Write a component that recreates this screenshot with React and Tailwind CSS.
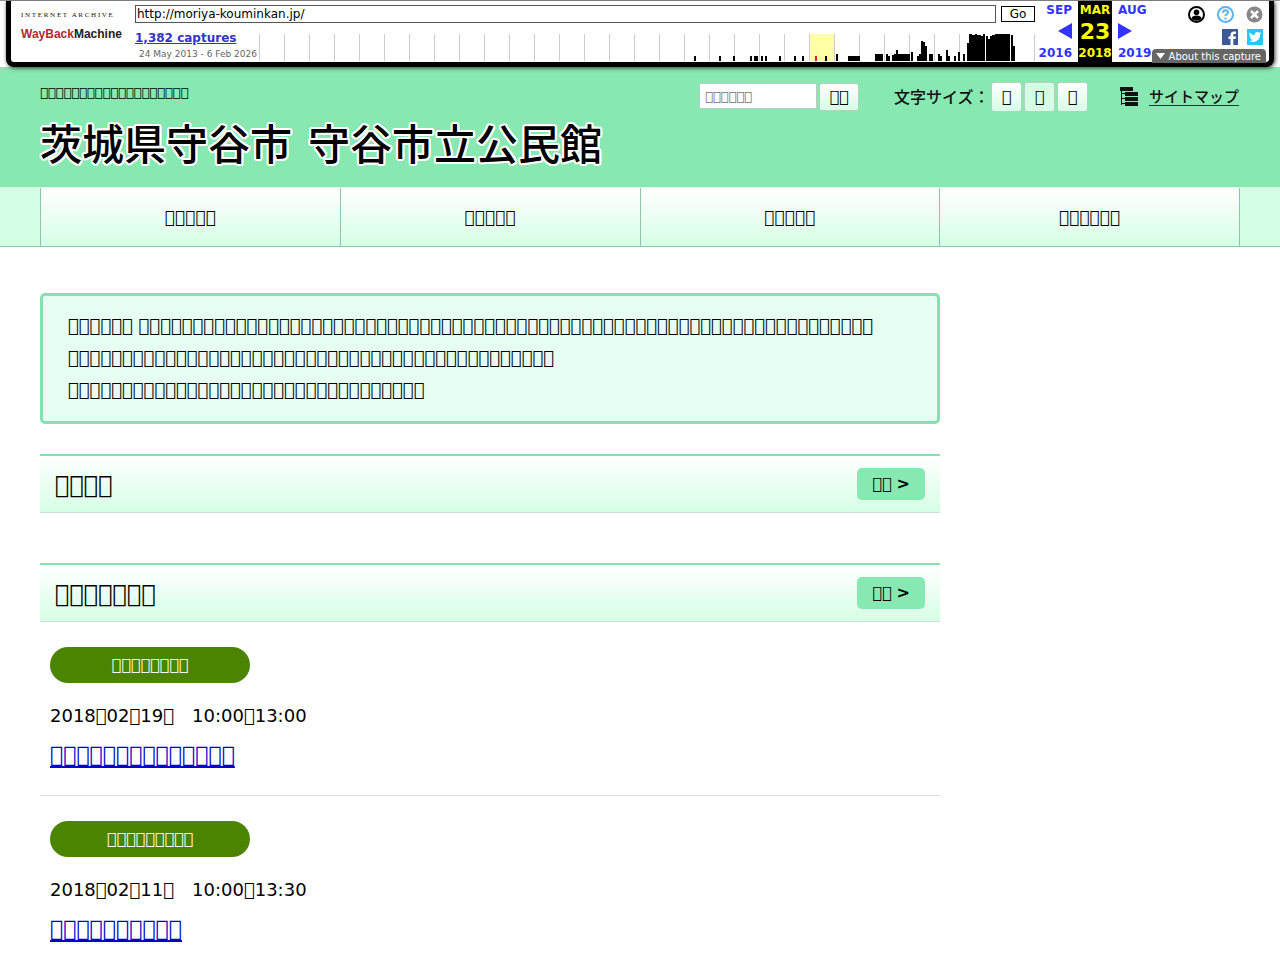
// private use character, drawn as the empty box of the current font
const box = (n) => '\uE9A5'.repeat(n);

const bars = [
  [695, 5], [720, 5], [734, 5], [751, 5], [755, 5], [757, 5], [762, 5], [766, 5],
  [780, 5], [795, 5], [803, 5], [826, 5], [837, 7],
];

const blocks = [
  [848, 12, 5], [875, 8, 7], [886, 2, 7], [888, 2, 5], [892, 3, 6],
  [894, 2, 7], [896, 2, 11], [898, 12, 7], [911, 2, 9], [917, 2, 5], [919, 2, 7],
  [921, 2, 20], [923, 2, 19], [925, 2, 15], [929, 4, 7], [938, 2, 7], [940, 2, 5],
  [946, 2, 11], [948, 2, 5], [954, 2, 5], [958, 2, 9], [963, 2, 7],
  [967, 2, 18], [969, 3, 27], [972, 3, 26], [975, 2, 27], [977, 4, 26], [981, 2, 25],
  [983, 2, 27], [986, 2, 25], [988, 2, 22], [990, 2, 25], [992, 3, 26], [995, 15, 27],
  [1011, 2, 26], [1013, 2, 15],
];

const navItems = [5, 5, 5, 6];

const events = [
  { tag: 8, date: `2018${box(1)}02${box(1)}19${box(1)}`, time: `10:00${box(1)}13:00`, title: 14 },
  { tag: 9, date: `2018${box(1)}02${box(1)}11${box(1)}`, time: `10:00${box(1)}13:30`, title: 10 },
];

function Sparkline() {
  return (
    <svg width="776" height="27" viewBox="259 0 776 27" shapeRendering="crispEdges">
      <rect x="809" y="0" width="25" height="27" fill="#ffffa5" />
      {Array.from({ length: 32 }, (_, i) => (
        <rect key={i} x={259 + i * 25} y="0" width="1" height="27" fill="#ccc" />
      ))}
      {bars.map(([x, h]) => (
        <rect key={x} x={x - 1} y={27 - h} width="2" height={h} />
      ))}
      {blocks.map(([x, w, h]) => (
        <rect key={x} x={x} y={27 - h} width={w} height={h} />
      ))}
      <rect x="815" y="22" width="2" height="5" fill="#d0203a" />
    </svg>
  );
}

function WaybackToolbar() {
  return (
    <div className="border-t border-[#979797]">
      <div className="mx-[6px] flex h-[66px] rounded-b-lg border-x-[5px] border-b-[5px] border-black bg-white shadow-[1px_1px_4px_#333]">
        <a href="#" className="w-[124px] shrink-0 pt-[10px] pl-[10px] font-['Liberation_Serif',serif]">
          <span className="block whitespace-pre text-[7px] leading-[8px] text-[#111]">I N T E R N E T   A R C H I V E</span>
          <span className="block font-['Liberation_Sans',sans-serif] text-[12px] leading-[30px] font-bold text-[#222]">
            <span className="text-[#b02a30]">WayBack</span>Machine
          </span>
        </a>
        <div className="min-w-0 flex-1">
          <form className="flex items-center gap-[5px] pt-1">
            <input
              aria-label="URL"
              defaultValue="http://moriya-kouminkan.jp/"
              className="h-[18px] min-w-0 flex-1 border border-[#555] px-px text-[12px]"
            />
            <button type="button" className="h-4 w-[34px] border border-black text-[12px] leading-[14px]">Go</button>
          </form>
          <div className="flex pt-[7px]">
            <div className="w-[124px] shrink-0 overflow-hidden whitespace-nowrap">
              <a href="#" className="block text-[12px] leading-4 font-bold text-[#33c] underline">1,382 captures</a>
              <div className="pl-1 text-[9px] leading-4 text-[#666]">24 May 2013 - 6 Feb 2026</div>
            </div>
            <div className="pt-1"><Sparkline /></div>
          </div>
        </div>
        <div className="flex shrink-0 text-[12px] leading-[18px] font-bold text-[#33f]">
          <div className="flex w-[43px] flex-col items-end pr-[6px]">
            <a href="#">SEP</a>
            <svg className="my-1" width="14" height="18"><path d="M14 0v16L0 8z" fill="#33f" /></svg>
            <a href="#">2016</a>
          </div>
          <div className="flex w-[34px] flex-col items-center bg-black text-[#ff0]">
            <span>MAR</span>
            <span className="text-[22px] leading-[25px]">23</span>
            <span>2018</span>
          </div>
          <div className="flex w-[41px] flex-col pl-[6px]">
            <a href="#">AUG</a>
            <svg className="my-1" width="14" height="18"><path d="M0 0v16l14-8z" fill="#33f" /></svg>
            <a href="#">2019</a>
          </div>
        </div>
        <div className="flex w-[116px] shrink-0 flex-col items-end">
          <div className="flex items-center gap-3 pt-[5px] pr-[6px]">
            <button type="button" aria-label="Sign in">
              <svg width="17" height="17" viewBox="0 0 17 17">
                <circle cx="8.500" cy="8.500" r="7.500" fill="none" stroke="#000" strokeWidth="2" />
                <circle cx="8.500" cy="6.300" r="2.800" />
                <path d="M3.500 12.500c0-4 10-4 10 0-2.500 3-7.500 3-10 0z" />
              </svg>
            </button>
            <button type="button" aria-label="Help">
              <svg width="17" height="17" viewBox="0 0 17 17" fill="none" stroke="#5ab4ea" strokeWidth="2">
                <circle cx="8.500" cy="8.500" r="7.500" />
                <path d="M6 6.800c0-3.200 5-3.200 5-.3 0 1.800-2.500 1.800-2.500 3.600M8.500 11.500v2" />
              </svg>
            </button>
            <button type="button" aria-label="Close">
              <svg width="17" height="17" viewBox="0 0 17 17">
                <circle cx="8.500" cy="8.500" r="8" fill="#888" />
                <path d="M5 5l7 7m0-7l-7 7" stroke="#fff" strokeWidth="2.500" />
              </svg>
            </button>
          </div>
          <div className="flex gap-[9px] pt-[6px] pr-[6px]">
            <a href="#" aria-label="Facebook">
              <svg width="16" height="16" viewBox="0 0 16 16">
                <path d="M0 0h16v16H0z" fill="#3b5998" />
                <path d="M8.500 16V10H6.500V7.500h2V6c0-2.300 1.200-3.500 3.300-3.500H14v2.400h-1.500c-.8 0-1.200.4-1.200 1.100v1.500H14l-.4 2.500h-2.300v6z" fill="#fff" />
              </svg>
            </a>
            <a href="#" aria-label="Twitter">
              <svg width="16" height="16" viewBox="0 0 16 16">
                <path d="M0 0h16v16H0z" fill="#1dcaff" />
                <path d="M2.500 3.500c1.400 1.600 3 2.500 5.200 2.600C7.300 3 10.800 2 12.300 3.700l1.700-.6-1 1.500 1.300-.3-1.300 1.400c.1 5.500-5.500 9-11 6.300 1.500 0 2.700-.3 3.600-1.100-1.200-.1-2-.8-2.300-1.800h1.100C3.100 8.700 2.400 7.700 2.400 6.500l1.100.3C2.400 6 2 4.800 2.500 3.500z" fill="#fff" />
              </svg>
            </a>
          </div>
          <button type="button" className="mt-1 mr-[3px] flex h-[14px] shrink-0 items-center gap-1 rounded-t-sm bg-[#666] pr-[5px] pl-1 text-[10px] whitespace-nowrap text-white">
            <svg width="9" height="6"><path d="M0 0h9L4.500 6z" fill="#fff" /></svg>
            About this capture
          </button>
        </div>
      </div>
    </div>
  );
}

const sizeButton = 'h-[30px] w-[31px] rounded-[3px] border border-[#b5cfc0] bg-linear-to-b text-[16px]';

function Header() {
  return (
    <header className="bg-[#87e8b1] px-10">
      <div className="flex h-[120px] justify-between">
        <div>
          <p className="pt-[17px] text-[13px] leading-[18px]">{box(19)}</p>
          <h1 className="flex gap-4 pt-[14px] font-['Noto_Sans_CJK_JP',sans-serif] text-[42px] leading-[52px] font-medium [text-shadow:-2px_-1px_#fff,2px_-1px_#fff,-2px_1px_#fff,2px_1px_#fff,-1px_-2px_#fff,1px_-2px_#fff,-1px_2px_#fff,1px_2px_#fff]">
            <span>茨城県守谷市</span>
            <span>守谷市立公民館</span>
          </h1>
        </div>
        <div className="flex items-start pt-[15px] pr-px">
          <div className="flex gap-[2px] pt-px">
            <input
              aria-label="search"
              placeholder={box(6)}
              className="h-[26px] w-[118px] border border-[#b5cfc0] bg-white px-[5px] text-[13px] placeholder:text-[#757575]"
            />
            <button type="button" className="h-[28px] w-10 rounded-[3px] border border-[#b5cfc0] bg-linear-to-b from-white to-[#d5ffe5] text-[16px]">{box(2)}</button>
          </div>
          <span className="ml-[35px] w-[97px] font-['Noto_Sans_CJK_JP',sans-serif] text-[16px] leading-7 font-medium whitespace-nowrap text-[#111]">文字サイズ：</span>
          <div className="flex gap-[2px]">
            <button type="button" className={`${sizeButton} from-white to-[#d5ffe5]`}>{box(1)}</button>
            <button type="button" className={`${sizeButton} from-[#d5ffe5] to-[#d5ffe5]`}>{box(1)}</button>
            <button type="button" className={`${sizeButton} from-white to-[#d5ffe5]`}>{box(1)}</button>
          </div>
          <a href="#" className="ml-8 flex items-start gap-[11px] pt-[5px]">
            <svg width="18" height="19" viewBox="0 0 18 19" fill="#111">
              <path d="M0 0h13v4H0zM5 5h13v4H5zM5 10h13v4H5zM5 15h13v4H5zM1 4h1v14H1zM1 6h4v1H1zM1 11h4v1H1zM1 16h4v1H1z" />
            </svg>
            <span className="border-b border-[#333] font-['Noto_Sans_CJK_JP',sans-serif] text-[15px] leading-[18px] font-medium text-[#111]">サイトマップ</span>
          </a>
        </div>
      </div>
    </header>
  );
}

function SectionTitle({ count }) {
  return (
    <div className="flex h-[59px] items-start justify-between border-t-2 border-b border-t-[#87e0b1] border-b-[#ccdfd4] bg-linear-to-b from-white to-[#d5ffe5] px-[15px]">
      <h2 className="pt-[11px] text-[24px] leading-9">{box(count)}</h2>
      <a href="#" className="mt-3 h-8 rounded-[5px] bg-[#87e8b1] px-[15px] text-[16px] leading-8">{box(2)} <span className="font-bold">&gt;</span></a>
    </div>
  );
}

export default function App() {
  return (
    <div className="bg-white font-['DejaVu_Sans',sans-serif] text-black">
      <div className="relative z-10"><WaybackToolbar /></div>
      <Header />
      <nav className="flex border-b border-[#8fc5a8] bg-[#d5ffe5] px-10 pt-px">
        <ul className="flex flex-1 border-l border-[#8fc5a8]">
          {navItems.map((n, i) => (
            <li key={i} className="flex-1 border-r border-[#8fc5a8] bg-linear-to-b from-white to-[#d5ffe5]">
              <a href="#" className="block text-center text-[17px] leading-[58px]">{box(n)}</a>
            </li>
          ))}
        </ul>
      </nav>
      <main className="mx-10 mt-[46px] max-w-[900px]">
        <div className="rounded-[5px] border-3 border-[#87e0b1] bg-[#e7fff2] px-[25px] pt-[14px] pb-[15px] text-[18px] leading-8">
          <p>{box(6)} {box(68)}</p>
          <p>{box(45)}</p>
          <p>{box(33)}</p>
        </div>
        <section className="mt-[30px]">
          <SectionTitle count={4} />
        </section>
        <section className="mt-[50px]">
          <SectionTitle count={7} />
          {events.map((e) => (
            <article key={e.date} className="border-b border-[#ddd] px-[10px] pt-[25px] pb-[22px]">
              <span className="block h-9 w-[200px] rounded-[18px] bg-[#4b8500] text-center text-[16px] leading-9 text-white">{box(e.tag)}</span>
              <p className="pt-[17px] text-[18px] leading-8">{e.date}　{e.time}</p>
              <h3 className="pt-[5px] text-[22px] leading-9">
                <a href="#" className="text-[#0000cc] underline decoration-2 underline-offset-4 [text-decoration-skip-ink:none]">{box(e.title)}</a>
              </h3>
            </article>
          ))}
        </section>
      </main>
    </div>
  );
}
